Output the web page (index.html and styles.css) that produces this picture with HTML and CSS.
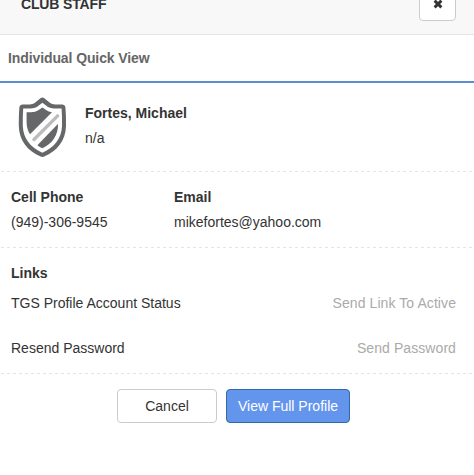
FILE: index.html
```html
<!DOCTYPE html>
<html>

<head>
    <meta charset="utf-8">
    <title>Club Staff</title>
    <link rel="stylesheet" href="styles.css">
</head>

<body>
    <div class="modal-header">
        <h4>CLUB STAFF</h4>
        <button class="btn btn-close" aria-label="Close">
            <svg width="10" height="10" viewBox="0 0 10 10">
                <path d="M1.6 1.6L8.4 8.4M8.4 1.6L1.6 8.4" stroke="#333" stroke-width="2.9" />
            </svg>
        </button>
    </div>
    <div class="tab-title">Individual Quick View</div>

    <div class="section profile">
        <svg class="shield" width="50" height="62" viewBox="0 0 50 62">
            <path d="M22.8 .9Q24.4 -.1 26 .9L32.5 6.3Q34 7.3 37 7.6H44.5Q47 7.8 47.4 10Q48.1 18 48 29C47.6 44 39 54 26.2 59.6Q24.4 60.3 22.6 59.6C9.8 54 1.2 44 .8 29Q.7 18 1.4 10Q1.8 7.8 4.3 7.6H11.8Q14.8 7.3 16.3 6.3Z" fill="#666768" />
            <path d="M24.4 5.8L30 10Q32.4 11.4 36 11.6H43.6Q44.2 20 44 29C43.5 41.5 36.5 50.2 24.4 55.7C12.3 50.2 5.3 41.5 4.8 29Q4.6 20 5.2 11.6H12.8Q16.4 11.4 18.8 10Z" fill="#fff" />
            <path d="M24.4 10.6L28.5 13.2Q30.5 14.6 34 15.2L12 37.2Q8.7 32 8.6 25.5V15.2H13Q17.5 15 20.3 13.2Z" fill="#666768" />
            <path d="M40.1 26.8C40.2 38 34.4 46.8 24.4 51.2Q21.6 50 19.4 48.2Z" fill="#666768" />
            <path d="M16 42.5L39.6 18.9" stroke="#bcbcbc" stroke-width="3.4" stroke-linecap="round" />
        </svg>
        <div>
            <div class="label">Fortes, Michael</div>
            <div>n/a</div>
        </div>
    </div>

    <div class="section contact">
        <div>
            <div class="label">Cell Phone</div>
            <div>(949)-306-9545</div>
        </div>
        <div>
            <div class="label">Email</div>
            <div>mikefortes@yahoo.com</div>
        </div>
    </div>

    <div class="section links">
        <div class="label">Links</div>
        <div class="link-row">
            <span>TGS Profile Account Status</span>
            <a class="link-action">Send Link To Active</a>
        </div>
        <div class="link-row">
            <span>Resend Password</span>
            <a class="link-action">Send Password</a>
        </div>
    </div>

    <div class="modal-footer">
        <button class="btn btn-cancel">Cancel</button>
        <button class="btn btn-primary">View Full Profile</button>
    </div>
</body>

</html>
```
FILE: styles.css
```css
body {
    margin: 0;
    font-family: "Helvetica Neue", Helvetica, "Liberation Sans", Arial, sans-serif;
    font-size: 14px;
    line-height: 25px;
    color: #333;
    background: #fff;
    overflow: hidden;
}

.modal-header {
    display: flex;
    justify-content: space-between;
    align-items: center;
    box-sizing: border-box;
    height: 61px;
    margin-top: -26px;
    padding: 0 18px 0 21px;
    background: #f8f8f8;
    border-bottom: 1px solid #e5e5e5;
}

.modal-header h4 {
    margin: 0;
    font-size: 14px;
    font-weight: bold;
    letter-spacing: -0.15px;
}

.btn {
    display: flex;
    justify-content: center;
    align-items: center;
    box-sizing: border-box;
    height: 34px;
    padding: 0;
    font: inherit;
    line-height: 20px;
    color: #333;
    background: #fff;
    border: 1px solid #ccc;
    border-radius: 4px;
}

.btn-close {
    width: 37px;
}

.tab-title {
    height: 35px;
    padding: 11px 8px 0;
    font-weight: bold;
    letter-spacing: -0.1px;
    color: #666;
    border-bottom: 2px solid #5b8fd2;
}

/* dashed rule along the bottom of each section */
.section {
    margin-left: 1px;
    padding: 13px 18px 13px 10px;
    background: repeating-linear-gradient(to right, #e5e5e5 0 3px, transparent 3px 6px) bottom / 100% 1px no-repeat;
}

.label {
    font-weight: bold;
}

.profile {
    display: flex;
    gap: 17px;
    padding: 18px 17px 21px;
}

.shield {
    height: 62px;
    margin: -4px 0 -8px;
}

.contact {
    display: grid;
    grid-template-columns: 163px 1fr;
}

.link-row {
    display: flex;
    justify-content: space-between;
    margin-top: 5px;
}

.link-row + .link-row {
    margin-top: 20px;
}

.link-action {
    color: #aaa;
    letter-spacing: 0.08px;
}

.modal-footer {
    display: flex;
    justify-content: center;
    gap: 9px;
    padding: 15px 7px 0 0;
}

.btn-cancel {
    width: 100px;
}

.btn-primary {
    width: 124px;
    color: #fff;
    background: #6495ed;
    border-color: #2e6da4;
}
```
